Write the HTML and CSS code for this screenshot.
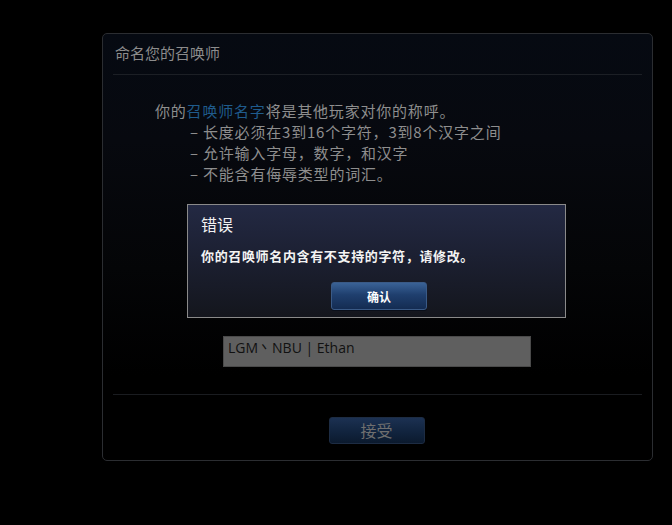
FILE: index.html
```html
<!DOCTYPE html>
<html lang="zh">
<head>
<meta charset="utf-8">
<link rel="stylesheet" href="styles.css">
</head>
<body>
<div class="panel">
  <div class="panel-head"><span class="title">命名您的召唤师</span></div>
  <div class="intro">
    <p class="lead">你的<span class="hl">召唤师名字</span>将是其他玩家对你的称呼。</p>
    <ul class="rules">
      <li>– 长度必须在3到16个字符，3到8个汉字之间</li>
      <li>– 允许输入字母，数字，和汉字</li>
      <li>– 不能含有侮辱类型的词汇。</li>
    </ul>
  </div>
  <div class="field-row"><div class="field">LGM丶NBU | Ethan</div></div>
  <div class="foot">
    <button class="accept">接受</button>
  </div>
  <div class="dialog">
    <div class="dlg-title">错误</div>
    <div class="dlg-msg">你的召唤师名内含有不支持的字符，请修改。</div>
    <div class="dlg-actions"><button class="ok">确认</button></div>
  </div>
</div>
</body>
</html>
```
FILE: styles.css
```css
html, body {
  margin: 0;
  padding: 0;
  background: #000;
  width: 672px;
  height: 525px;
  overflow: hidden;
  font-family: "Noto Sans CJK SC", "Noto Sans", sans-serif;
}
body {
  padding: 33px 0 0 102px;
  box-sizing: border-box;
}
.panel {
  position: relative;
  width: 551px;
  height: 428px;
  box-sizing: border-box;
  border: 1px solid #2b2d31;
  border-radius: 5px;
  background: linear-gradient(to bottom, #060a12 0%, #07090f 25%, #040507 55%, #000 80%, #000 100%);
}
.panel-head {
  height: 40px;
  margin: 0 10px;
  border-bottom: 1px solid #1c1f25;
  display: flex;
  align-items: center;
}
.title {
  color: #8c8c8c;
  font-size: 15px;
  margin-left: 2px;
  margin-top: -3px;
}
.intro {
  padding-left: 52px;
  margin-top: 25px;
  color: #8e8e8e;
  font-size: 15px;
  letter-spacing: 0.8px;
  line-height: 21px;
}
.lead { margin: 0; }
.hl { color: #1f5b8c; }
.rules {
  list-style: none;
  margin: 0;
  padding: 0 0 0 35px;
}
.field-row {
  margin-top: 152px;
  padding-left: 120px;
}
.field {
  width: 308px;
  height: 31px;
  box-sizing: border-box;
  background: #5f5f5f;
  border: 1px solid #4a4a4a;
  color: #111;
  font-family: "Open Sans", "Noto Sans", sans-serif;
  font-size: 14px;
  line-height: 22px;
  padding-left: 4px;
}
.foot {
  margin: 27px 10px 0;
  border-top: 1px solid #1a1c20;
  display: flex;
  justify-content: center;
  padding-top: 22px;
}
.accept {
  width: 96px;
  height: 27px;
  margin-left: -2px;
  border: 1px solid #1d2c43;
  border-radius: 3px;
  background: linear-gradient(to bottom, #1c3152 0%, #122540 50%, #0b1a2e 100%);
  color: #6f6f6f;
  font-family: "Noto Sans CJK SC", sans-serif;
  font-size: 16px;
  padding: 0;
  line-height: 25px;
}
.dialog {
  position: absolute;
  left: 84px;
  top: 170px;
  width: 379px;
  height: 114px;
  box-sizing: border-box;
  border: 1px solid #8a8a8a;
  background: linear-gradient(to bottom, #232943 0%, #1c2032 45%, #14161d 100%);
  padding: 8px 0 0 13px;
}
.dlg-title {
  color: #f2f2f2;
  font-size: 16px;
  line-height: 22px;
}
.dlg-msg {
  margin-top: 11px;
  color: #f4f4f4;
  font-size: 13px;
  font-weight: bold;
  letter-spacing: 0.65px;
  line-height: 20px;
}
.dlg-actions {
  margin-top: 16px;
  padding-left: 130px;
}
.ok {
  width: 96px;
  height: 28px;
  border: 1px solid #3a5a86;
  border-radius: 3px;
  background: linear-gradient(to bottom, #3a6296 0%, #1f3f6e 45%, #142c52 100%);
  color: #fff;
  font-family: "Noto Sans CJK SC", sans-serif;
  font-weight: bold;
  font-size: 12px;
  padding: 0;
  box-shadow: 0 1px 0 #0a0f1a;
}
```
